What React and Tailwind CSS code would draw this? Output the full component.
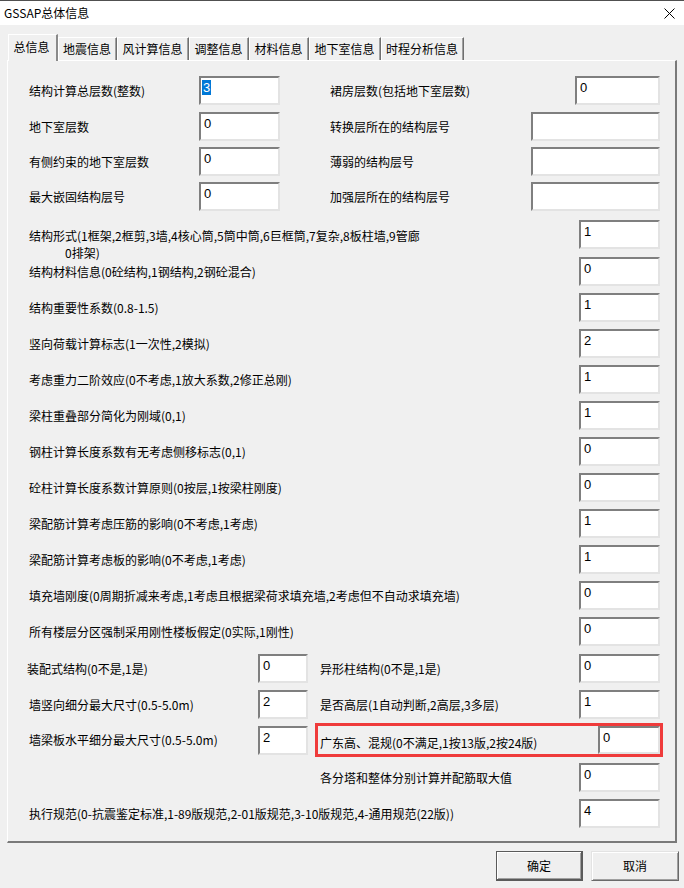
import React from "react";

const cjk = "font-['Noto_Sans_CJK_SC',sans-serif] text-[12px] text-black";

const Box = ({ value = "", width = "w-[81px]", height = "h-[29px]", selected = false }) => (
  <div
    className={`${width} ${height} shrink-0 bg-white border-2 border-t-[#7f7f7f] border-l-[#7f7f7f] border-r-[#e3e3e3] border-b-[#e3e3e3] pl-px pt-px font-['Liberation_Sans',sans-serif] text-[13px] leading-[17px] text-black`}
  >
    {selected ? <span className="bg-[#0078d7] text-white px-px">{value}</span> : <span className="pl-[2px]">{value}</span>}
  </div>
);

const Row = ({ label, value, mt = "mt-[7px]" }) => (
  <div className={`${mt} flex h-[29px] items-center`}>
    <span className={`flex-1 ${cjk}`}>{label}</span>
    <Box value={value} />
  </div>
);

const tabs = [
  ["地震信息", "w-[59px]"],
  ["风计算信息", "w-[72px]"],
  ["调整信息", "w-[60px]"],
  ["材料信息", "w-[60px]"],
  ["地下室信息", "w-[72px]"],
  ["时程分析信息", "w-[83px]"],
];

const App = () => {
  return (
    <div className={`w-[684px] h-[888px] bg-[#f0f0f0] border-t border-[#505050] flex flex-col ${cjk}`}>
      {/* title bar */}
      <div className="h-[24px] bg-white flex items-center justify-between pl-[4px] pr-[8px]">
        <span className="text-[12px]">GSSAP总体信息</span>
        <svg width="11" height="11" viewBox="0 0 11 11" className="mr-[1px]">
          <path d="M0.5 0.5 L10.5 10.5 M10.5 0.5 L0.5 10.5" stroke="#000" strokeWidth="1" />
        </svg>
      </div>

      {/* tabs */}
      <div className="mt-[9px] h-[26px] flex items-end pl-[8px]">
        <div className="relative z-10 -mb-px w-[50px] h-[27px] bg-[#f0f0f0] border-l border-t border-white border-r-2 border-r-[#8a8a8a] flex items-start justify-center pt-[3px] pr-[2px]">
          总信息
        </div>
        {tabs.map(([t, w]) => (
          <div
            key={t}
            className={`${w} h-[23px] border-l border-t border-white border-r border-r-[#6f6f6f] shadow-[inset_-1px_0_0_#a0a0a0] flex items-center justify-center pr-[1px]`}
          >
            {t}
          </div>
        ))}
      </div>

      {/* panel */}
      <div className="ml-[7px] w-[670px] border-l border-t border-white border-r-2 border-b-2 border-r-[#7a7a7a] border-b-[#7a7a7a] pl-[21px] pr-[15px] pt-[15px] pb-[13px] flex flex-col">
        {[
          ["结构计算总层数(整数)", "3", "裙房层数(包括地下室层数)", "0", "w-[85px]", "mt-0", true],
          ["地下室层数", "0", "转换层所在的结构层号", "", "w-[129px]", "mt-[7px]"],
          ["有侧约束的地下室层数", "0", "薄弱的结构层号", "", "w-[129px]", "mt-[6px]"],
          ["最大嵌固结构层号", "0", "加强层所在的结构层号", "", "w-[129px]", "mt-[6px]"],
        ].map(([l, v, r, rv, rw, mt, sel]) => (
          <div key={l} className={`${mt} flex h-[29px] items-center`}>
            <span className="w-[170px] shrink-0">{l}</span>
            <Box value={v} selected={sel} />
            <span className="ml-[50px] flex-1">{r}</span>
            <Box value={rv} width={rw} />
          </div>
        ))}

        <div className="mt-[9px] flex h-[29px] items-start">
          <div className="flex-1 pt-[7px] leading-[17px]">
            <div>结构形式(1框架,2框剪,3墙,4核心筒,5筒中筒,6巨框筒,7复杂,8板柱墙,9管廊</div>
            <div className="pl-[36px]">0排架)</div>
          </div>
          <Box value="1" />
        </div>

        <Row mt="mt-[8px]" label="结构材料信息(0砼结构,1钢结构,2钢砼混合)" value="0" />
        <Row label="结构重要性系数(0.8-1.5)" value="1" />
        <Row label="竖向荷载计算标志(1一次性,2模拟)" value="2" />
        <Row label="考虑重力二阶效应(0不考虑,1放大系数,2修正总刚)" value="1" />
        <Row label="梁柱重叠部分简化为刚域(0,1)" value="1" />
        <Row label="钢柱计算长度系数有无考虑侧移标志(0,1)" value="0" />
        <Row label="砼柱计算长度系数计算原则(0按层,1按梁柱刚度)" value="0" />
        <Row label="梁配筋计算考虑压筋的影响(0不考虑,1考虑)" value="1" />
        <Row label="梁配筋计算考虑板的影响(0不考虑,1考虑)" value="1" />
        <Row label="填充墙刚度(0周期折减来考虑,1考虑且根据梁荷求填充墙,2考虑但不自动求填充墙)" value="0" />
        <Row label="所有楼层分区强制采用刚性楼板假定(0实际,1刚性)" value="0" />

        <div className="mt-[8px] flex h-[29px] items-center">
          <span className="-ml-[2px] w-[231px] shrink-0">装配式结构(0不是,1是)</span>
          <Box value="0" width="w-[50px]" />
          <span className="ml-[12px] flex-1">异形柱结构(0不是,1是)</span>
          <Box value="0" />
        </div>

        <div className="mt-[7px] flex h-[29px] items-center">
          <span className="w-[229px] shrink-0">墙竖向细分最大尺寸(0.5-5.0m)</span>
          <Box value="2" width="w-[50px]" />
          <span className="ml-[12px] flex-1">是否高层(1自动判断,2高层,3多层)</span>
          <Box value="1" />
        </div>

        <div className="mt-[4px] flex h-[34px] items-center">
          <span className="w-[229px] shrink-0">墙梁板水平细分最大尺寸(0.5-5.0m)</span>
          <Box value="2" width="w-[50px]" />
          <div className="ml-[7px] -mr-[3px] flex-1 h-[34px] border-[3px] border-[#ef3b3b] flex items-center pl-[2px]">
            <span className="flex-1 pt-[6px]">广东高、混规(0不满足,1按13版,2按24版)</span>
            <Box value="0" width="w-[62px]" height="h-[28px]" />
          </div>
        </div>

        <div className="mt-[6px] flex h-[29px] items-center pl-[291px]">
          <span className="flex-1">各分塔和整体分别计算并配筋取大值</span>
          <Box value="0" />
        </div>

        <Row label="执行规范(0-抗震鉴定标准,1-89版规范,2-01版规范,3-10版规范,4-通用规范(22版))" value="4" />
      </div>

      {/* buttons */}
      <div className="mt-[8px] flex justify-end gap-[8px] pr-[5px]">
        <button className="w-[87px] h-[30px] bg-[#efefef] border border-[#5a5a5a] border-b-2 border-r-2 shadow-[inset_1px_1px_0_#ffffff,inset_-1px_-1px_0_#a0a0a0] flex items-center justify-center">
          确定
        </button>
        <button className="w-[88px] h-[30px] bg-[#efefef] border border-t-[#e3e3e3] border-l-[#e3e3e3] border-r-[#6a6a6a] border-b-[#6a6a6a] shadow-[inset_1px_1px_0_#ffffff,inset_-1px_-1px_0_#a0a0a0] flex items-center justify-center">
          取消
        </button>
      </div>
    </div>
  );
};

export default App;
